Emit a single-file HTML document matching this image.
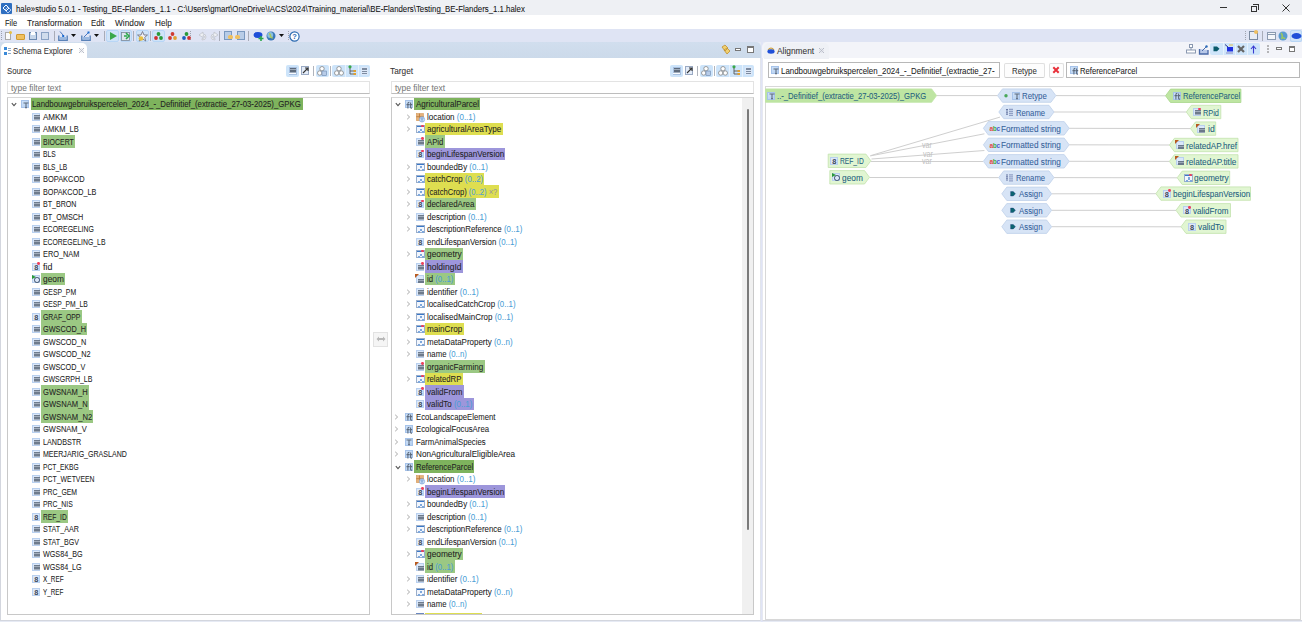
<!DOCTYPE html>
<html><head><meta charset="utf-8"><style>
*{margin:0;padding:0;box-sizing:border-box}
html,body{width:1302px;height:622px;overflow:hidden;background:#e6eaf4;font-family:"Liberation Sans", sans-serif;}
.t{position:absolute;white-space:nowrap;font-size:9.2px;line-height:10px;color:#222;transform-origin:0 0;-webkit-text-stroke:0.06px currentColor}
.sv{position:absolute;overflow:visible}
.ic{position:absolute;width:8px;height:8px}
.icb{background:linear-gradient(135deg,#cfe2f8,#b4cff0);border:0.5px solid #a6c3ea}
.icl{background:#dbe8fa;border:0.5px solid #b9d0ef}
.icg{background:#f2f6fd;border:0.6px solid #9aaecb;width:8.8px}
.ic .g{position:absolute;left:0;top:-1px;width:100%;text-align:center;font-size:7px;line-height:10px;font-weight:bold;color:#3d4f6a}
.ic .ln{position:absolute;left:1px;width:5.5px;height:1px;background:#4d5a6c}
.ic .sq{position:absolute;width:2.2px;height:2.2px;background:#7ea8dc}
.ic .g8{position:absolute;left:0.2px;top:-0.6px;width:100%;text-align:center;font-size:7.4px;line-height:9px;font-weight:bold;color:#3d4858}
.rd{position:absolute;width:2.8px;height:2.8px;border-radius:50%;background:#f0405a}
</style></head><body>
<div style="position:absolute;left:0px;top:0px;width:1302px;height:15px;background:#eef0f4"></div><div style="position:absolute;left:1px;top:3px;width:11px;height:11px;background:#2f6fc0;border-radius:1px"></div><svg class="sv" style="left:1px;top:3px" width="11" height="11"><path d="M2 5 L5 2 L8 5 L5 8 Z" stroke="#fff" stroke-width="1" fill="none"/><path d="M4 7 L7 4 L10 7 L7 10Z" stroke="#cfe0ff" stroke-width="0.8" fill="none"/></svg><div class="t" style="left:16px;top:3.75px;color:#111;transform:scaleX(0.8531)">hale»studio 5.0.1 - Testing_BE-Flanders_1.1 - C:\Users\gmart\OneDrive\IACS\2024\Training_material\BE-Flanders\Testing_BE-Flanders_1.1.halex</div><div style="position:absolute;left:1220px;top:7px;width:7px;height:1px;background:#333"></div><div style="position:absolute;left:1250.5px;top:6px;width:6px;height:6px;border:1px solid #333;background:#eef0f4"></div><div style="position:absolute;left:1252.5px;top:4px;width:6px;height:6px;border-top:1px solid #333;border-right:1px solid #333"></div><svg class="sv" style="left:1282px;top:4px" width="8" height="8"><path d="M0.5 0.5 L7.5 7.5 M7.5 0.5 L0.5 7.5" stroke="#333" stroke-width="1"/></svg><div style="position:absolute;left:0px;top:15px;width:1302px;height:14px;background:#ffffff"></div><div class="t" style="left:4.7px;top:17.65px;color:#222;transform:scaleX(0.8140)">File</div><div class="t" style="left:26.8px;top:17.65px;color:#222;transform:scaleX(0.8944)">Transformation</div><div class="t" style="left:90.6px;top:17.65px;color:#222;transform:scaleX(0.8559)">Edit</div><div class="t" style="left:114.5px;top:17.65px;color:#222;transform:scaleX(0.9046)">Window</div><div class="t" style="left:154.5px;top:17.65px;color:#222;transform:scaleX(0.8919)">Help</div><div style="position:absolute;left:0px;top:29px;width:1302px;height:13px;background:#dfe4f4"></div><div style="position:absolute;left:1px;top:31px;width:1px;height:1px;background:#9aa0b0"></div><div style="position:absolute;left:1px;top:33px;width:1px;height:1px;background:#9aa0b0"></div><div style="position:absolute;left:1px;top:35px;width:1px;height:1px;background:#9aa0b0"></div><div style="position:absolute;left:1px;top:37px;width:1px;height:1px;background:#9aa0b0"></div><div style="position:absolute;left:1px;top:39px;width:1px;height:1px;background:#9aa0b0"></div><div style="position:absolute;left:106px;top:30px;width:13px;height:12px;background:#cfe3f8;border:1px solid #b8d6f6;border-radius:2px"></div><div style="position:absolute;left:119.5px;top:30px;width:12.5px;height:12px;background:#cfe3f8;border:1px solid #b8d6f6;border-radius:2px"></div><div style="position:absolute;left:135.5px;top:30px;width:13.5px;height:12px;background:#cfe3f8;border:1px solid #b8d6f6;border-radius:2px"></div><div style="position:absolute;left:151.5px;top:30px;width:13.5px;height:12px;background:#cfe3f8;border:1px solid #b8d6f6;border-radius:2px"></div><div style="position:absolute;left:53.5px;top:31px;width:1px;height:10px;background:#a8acb8"></div><div style="position:absolute;left:103.5px;top:31px;width:1px;height:10px;background:#a8acb8"></div><div style="position:absolute;left:133px;top:31px;width:1px;height:10px;background:#a8acb8"></div><div style="position:absolute;left:150px;top:31px;width:1px;height:10px;background:#a8acb8"></div><div style="position:absolute;left:219.4px;top:31px;width:1px;height:10px;background:#a8acb8"></div><div style="position:absolute;left:248.4px;top:31px;width:1px;height:10px;background:#a8acb8"></div><div style="position:absolute;left:190px;top:31px;width:1px;height:1px;background:#a0a4b0"></div><div style="position:absolute;left:190px;top:33px;width:1px;height:1px;background:#a0a4b0"></div><div style="position:absolute;left:190px;top:35px;width:1px;height:1px;background:#a0a4b0"></div><div style="position:absolute;left:190px;top:37px;width:1px;height:1px;background:#a0a4b0"></div><div style="position:absolute;left:190px;top:39px;width:1px;height:1px;background:#a0a4b0"></div><div style="position:absolute;left:287.5px;top:31px;width:1px;height:1px;background:#a0a4b0"></div><div style="position:absolute;left:287.5px;top:33px;width:1px;height:1px;background:#a0a4b0"></div><div style="position:absolute;left:287.5px;top:35px;width:1px;height:1px;background:#a0a4b0"></div><div style="position:absolute;left:287.5px;top:37px;width:1px;height:1px;background:#a0a4b0"></div><div style="position:absolute;left:287.5px;top:39px;width:1px;height:1px;background:#a0a4b0"></div><div style="position:absolute;left:5px;top:31.5px;width:6px;height:8px;background:#fafafa;border:1px solid #a9a9a9"></div><div style="position:absolute;left:9px;top:31px;width:3px;height:3px;background:#e8c040;border-radius:50%"></div><div style="position:absolute;left:16px;top:34px;width:9px;height:6px;background:#f0c060;border:1px solid #d09a30;border-radius:1px"></div><div style="position:absolute;left:29px;top:32px;width:8px;height:8px;background:#c5d5ea;border:1px solid #6a88b0"></div><div style="position:absolute;left:31px;top:32px;width:4px;height:3px;background:#fff"></div><div style="position:absolute;left:41px;top:32px;width:8px;height:8px;background:#d0dcec;border:1px solid #8aa2c4"></div><svg class="sv" style="left:58px;top:31px" width="10" height="10"><path d="M0.8 4.5 L0.8 9.2 L9.2 9.2 L9.2 4.5" fill="none" stroke="#5a82b8" stroke-width="1.4"/><rect x="1.5" y="6" width="7" height="2.5" fill="#9ab8e0"/><path d="M2 0.5 L5 4" stroke="#4a78c0" stroke-width="1"/><rect x="4.2" y="4" width="2" height="2" fill="#1a6ad0"/></svg><svg class="sv" style="left:71px;top:34px" width="6" height="4"><path d="M0 0 L5 0 L2.5 3Z" fill="#111"/></svg><svg class="sv" style="left:81px;top:31px" width="10" height="10"><path d="M0.8 4.5 L0.8 9.2 L9.2 9.2 L9.2 4.5" fill="none" stroke="#5a82b8" stroke-width="1.4"/><rect x="1.5" y="6" width="7" height="2.5" fill="#9ab8e0"/><path d="M3 6 L7 2" stroke="#4a78c0" stroke-width="1"/><rect x="6.5" y="0.5" width="2" height="2" fill="#1a6ad0"/></svg><svg class="sv" style="left:94px;top:34px" width="6" height="4"><path d="M0 0 L5 0 L2.5 3Z" fill="#111"/></svg><svg class="sv" style="left:108px;top:31px" width="10" height="10"><path d="M2 1 L9 5 L2 9Z" fill="#3aa84a"/></svg><svg class="sv" style="left:121px;top:31px" width="10" height="10"><rect x="0.5" y="1.5" width="8" height="8" fill="#dde4ec" stroke="#7a8898" stroke-width="0.8"/><path d="M3 5 L6 5 M5 2 L8 5 L5 8" stroke="#2aa84a" stroke-width="1.6" fill="none"/></svg><svg class="sv" style="left:137px;top:30.5px" width="11" height="11"><path d="M5.5 0.5 L7 4 L10.5 4 L7.7 6.3 L8.8 10 L5.5 7.8 L2.2 10 L3.3 6.3 L0.5 4 L4 4Z" fill="#f0f0f4" stroke="#6a6a78" stroke-width="0.8"/><circle cx="4" cy="7.5" r="2.3" fill="#e8c040"/></svg><svg class="sv" style="left:153px;top:31px" width="11" height="10"><circle cx="5.5" cy="3" r="1.9" fill="#2a9a3a"/><circle cx="3" cy="7" r="1.9" fill="#d03030"/><circle cx="8" cy="7" r="1.9" fill="#2a9a3a"/></svg><svg class="sv" style="left:167px;top:31px" width="11" height="10"><circle cx="5.5" cy="3" r="1.9" fill="#d03a30"/><circle cx="3" cy="7" r="1.9" fill="#d03a30"/><circle cx="8" cy="7" r="1.9" fill="#e0a030"/></svg><svg class="sv" style="left:181px;top:31px" width="11" height="10"><circle cx="5.5" cy="3" r="1.9" fill="#2a9a3a"/><circle cx="3" cy="7" r="1.9" fill="#2060c0"/><circle cx="8" cy="7" r="1.9" fill="#d03030"/></svg><svg class="sv" style="left:196px;top:31px" width="26" height="10"><path d="M3 4 L7 1 L7 3 Q10 3 10 6 Q10 9 6 9 L6 7.5 Q8.5 7.5 8.5 6 Q8.5 4.5 7 4.5 L7 6.5Z" fill="#eef0f4" stroke="#c0c4cc" stroke-width="0.8"/><path d="M22 4 L18 1 L18 3 Q15 3 15 6 Q15 9 19 9 L19 7.5 Q16.5 7.5 16.5 6 Q16.5 4.5 18 4.5 L18 6.5Z" fill="#eef0f4" stroke="#c0c4cc" stroke-width="0.8"/></svg><div style="position:absolute;left:224px;top:31px;width:8px;height:9px;background:#b8cce8;border:1px solid #7a98c0"></div><div style="position:absolute;left:228px;top:35px;width:5px;height:4px;background:#f0c060;border-radius:40%"></div><div style="position:absolute;left:237px;top:31px;width:8px;height:9px;background:#b8cce8;border:1px solid #7a98c0"></div><div style="position:absolute;left:235px;top:35px;width:5px;height:4px;background:#f0c060;border-radius:40%"></div><svg class="sv" style="left:253px;top:31px" width="12" height="11"><ellipse cx="5" cy="4" rx="4.5" ry="3" fill="#1f4fd8"/><path d="M8 5 L8 10 M5.5 7.5 L10.5 7.5" stroke="#2aa84a" stroke-width="1.6"/></svg><svg class="sv" style="left:266px;top:31px" width="10" height="10"><circle cx="5" cy="5" r="4.5" fill="#3a78b8"/><circle cx="4.2" cy="4" r="3" fill="#8ac0e0"/><path d="M3 2.5 Q5 3.5 4.5 6 Q6 6 6.5 7.5" stroke="#a8c860" stroke-width="1.4" fill="none"/></svg><svg class="sv" style="left:279px;top:34px" width="6" height="4"><path d="M0 0 L5 0 L2.5 3Z" fill="#111"/></svg><svg class="sv" style="left:289px;top:30.5px" width="11" height="11"><circle cx="5.5" cy="5.5" r="4.6" fill="#fff" stroke="#2a6ab0" stroke-width="1.2"/><text x="5.5" y="8.3" font-size="7.5" text-anchor="middle" fill="#2a6ab0" font-family="Liberation Sans" font-weight="bold">?</text></svg><div style="position:absolute;left:1245px;top:31px;width:1px;height:1px;background:#a0a4b0"></div><div style="position:absolute;left:1245px;top:33px;width:1px;height:1px;background:#a0a4b0"></div><div style="position:absolute;left:1245px;top:35px;width:1px;height:1px;background:#a0a4b0"></div><div style="position:absolute;left:1245px;top:37px;width:1px;height:1px;background:#a0a4b0"></div><div style="position:absolute;left:1245px;top:39px;width:1px;height:1px;background:#a0a4b0"></div><div style="position:absolute;left:1249px;top:31px;width:9px;height:9px;background:#e8ecf4;border:1px solid #7a8aa0"></div><div style="position:absolute;left:1254px;top:30px;width:4px;height:4px;background:#f0c060;border-radius:50%"></div><div style="position:absolute;left:1262px;top:31px;width:1px;height:10px;background:#a8acb8"></div><div style="position:absolute;left:1267px;top:32px;width:9px;height:8px;background:#f4f6fa;border:1px solid #8a9ab0"></div><div style="position:absolute;left:1267px;top:34px;width:9px;height:1px;background:#8a9ab0"></div><svg class="sv" style="left:1278px;top:31px" width="10" height="10"><circle cx="5" cy="5" r="4.5" fill="#5a9ad0"/><path d="M3 2 Q5 4 4 7 Q6 6 7 8" stroke="#9ac860" stroke-width="1.5" fill="none"/></svg><div style="position:absolute;left:1290px;top:30px;width:12px;height:12px;background:#cfe3f8;border:1px solid #b8d6f6;border-radius:2px"></div><svg class="sv" style="left:1291px;top:32px" width="11" height="8"><ellipse cx="5.5" cy="4" rx="5" ry="3" fill="#1f4fd8"/></svg><div style="position:absolute;left:0px;top:42px;width:761px;height:17px;background:linear-gradient(#d1deee,#ccdaea);border-top-right-radius:5px;border-bottom:1px solid #c6d4e6"></div><div style="position:absolute;left:0px;top:58px;width:761px;height:563px;background:#ffffff;border-left:1px solid #d3d6de;border-right:1px solid #e2e5ec;border-bottom:1px solid #d3d6de"></div><div style="position:absolute;left:1px;top:42.5px;width:86px;height:16px;background:#ffffff;border-top-left-radius:5px;border-top-right-radius:5px"></div><div style="position:absolute;left:4px;top:47px;width:3px;height:3px;background:#3a8ad8"></div><div style="position:absolute;left:4px;top:52px;width:3px;height:3px;background:#3a8ad8"></div><div style="position:absolute;left:8px;top:48px;width:3px;height:1px;background:#8aa8c8"></div><div style="position:absolute;left:8px;top:50px;width:3px;height:1px;background:#8aa8c8"></div><div style="position:absolute;left:8px;top:53px;width:3px;height:1px;background:#8aa8c8"></div><div class="t" style="left:13px;top:46px;color:#333;transform:scaleX(0.8469)">Schema Explorer</div><svg class="sv" style="left:78px;top:47px" width="7" height="7"><path d="M1 1 L6 6 M6 1 L1 6" stroke="#b8bcc8" stroke-width="1"/><circle cx="3.5" cy="3.5" r="1.6" fill="none" stroke="#c8ccd6" stroke-width="0.7"/></svg><svg class="sv" style="left:720px;top:44px" width="11" height="11"><path d="M2 3 L5 1 L8 4 L5 7Z M4 6 L7 4 L10 7 L7 10Z" fill="#f0d070" stroke="#c09030" stroke-width="0.8"/></svg><div style="position:absolute;left:735px;top:47.5px;width:6px;height:3px;border:1px solid #777;background:#fff"></div><div style="position:absolute;left:747px;top:45.5px;width:7px;height:7px;border:1px solid #777;border-top-width:2px;background:#fff"></div><div class="t" style="left:7px;top:66px;color:#333;transform:scaleX(0.8443)">Source</div><div class="t" style="left:390px;top:66px;color:#333;transform:scaleX(0.9029)">Target</div><div style="position:absolute;left:286px;top:64.5px;width:13px;height:12px;background:#cde4fa;border-radius:2px"></div><div style="position:absolute;left:288.5px;top:66.5px;width:8px;height:8px;background:#d8e6f8;border:0.5px solid #a8c0e0"></div><div style="position:absolute;left:289.5px;top:68px;width:6px;height:4.5px;background:repeating-linear-gradient(#5e6b7c 0 1px,#a0acbc 1px 1.7px)"></div><div style="position:absolute;left:289px;top:73.3px;width:7px;height:1px;background:#f8fbff"></div><div style="position:absolute;left:301px;top:66px;width:8px;height:9px;background:#e4ecf8;border:1px solid #9aaac4"></div><svg class="sv" style="left:302px;top:67px" width="7" height="7"><path d="M1 6 L6 1 M3 1 L6 1 L6 4" stroke="#333" stroke-width="1.1" fill="none"/></svg><div style="position:absolute;left:312.5px;top:66px;width:1px;height:10px;background:#b0b4bc"></div><div style="position:absolute;left:315.5px;top:64.5px;width:13px;height:12px;background:#cde4fa;border-radius:2px"></div><svg class="sv" style="left:317px;top:65.5px" width="10" height="10"><circle cx="5" cy="2.7" r="2.2" fill="#fff" stroke="#777" stroke-width="0.7"/><circle cx="2.7" cy="7" r="2.2" fill="#fff" stroke="#777" stroke-width="0.7"/><rect x="5" y="5" width="4.5" height="4.5" fill="#b8cce8" stroke="#6a88b0" stroke-width="0.6"/></svg><div style="position:absolute;left:329.5px;top:66px;width:1px;height:10px;background:#b0b4bc"></div><div style="position:absolute;left:332px;top:64.5px;width:38px;height:12px;background:#cde4fa;border-radius:2px"></div><div style="position:absolute;left:345px;top:64.5px;width:0.6px;height:12px;background:#e8f2fc"></div><div style="position:absolute;left:357.5px;top:64.5px;width:0.6px;height:12px;background:#e8f2fc"></div><svg class="sv" style="left:334px;top:65.5px" width="10" height="10"><circle cx="5" cy="2.7" r="2.2" fill="#fff" stroke="#777" stroke-width="0.7"/><circle cx="2.7" cy="7" r="2.2" fill="#fff" stroke="#777" stroke-width="0.7"/><circle cx="7.3" cy="7" r="2.2" fill="#fff" stroke="#777" stroke-width="0.7"/></svg><svg class="sv" style="left:347px;top:65px" width="10" height="11"><circle cx="3" cy="1.8" r="1.6" fill="#3aa84a"/><path d="M3 3 L3 9 L8 9 M3 6 L8 6" stroke="#555" stroke-width="0.9" fill="none"/><rect x="6.5" y="5" width="2.5" height="2" fill="#e0a030"/><rect x="6.5" y="8" width="2.5" height="2" fill="#e0a030"/></svg><div style="position:absolute;left:360.5px;top:66.5px;width:7px;height:8px;background:#dde8f8"></div><div style="position:absolute;left:361.5px;top:67.5px;width:5px;height:1px;background:#7d8ba0"></div><div style="position:absolute;left:361.5px;top:69.3px;width:5px;height:1px;background:#7d8ba0"></div><div style="position:absolute;left:361.5px;top:71.1px;width:5px;height:1px;background:#7d8ba0"></div><div style="position:absolute;left:361.5px;top:72.9px;width:5px;height:1px;background:#7d8ba0"></div><div style="position:absolute;left:670px;top:64.5px;width:13px;height:12px;background:#cde4fa;border-radius:2px"></div><div style="position:absolute;left:672.5px;top:66.5px;width:8px;height:8px;background:#d8e6f8;border:0.5px solid #a8c0e0"></div><div style="position:absolute;left:673.5px;top:68px;width:6px;height:4.5px;background:repeating-linear-gradient(#5e6b7c 0 1px,#a0acbc 1px 1.7px)"></div><div style="position:absolute;left:673px;top:73.3px;width:7px;height:1px;background:#f8fbff"></div><div style="position:absolute;left:685px;top:66px;width:8px;height:9px;background:#e4ecf8;border:1px solid #9aaac4"></div><svg class="sv" style="left:686px;top:67px" width="7" height="7"><path d="M1 6 L6 1 M3 1 L6 1 L6 4" stroke="#333" stroke-width="1.1" fill="none"/></svg><div style="position:absolute;left:696.5px;top:66px;width:1px;height:10px;background:#b0b4bc"></div><div style="position:absolute;left:699.5px;top:64.5px;width:13px;height:12px;background:#cde4fa;border-radius:2px"></div><svg class="sv" style="left:701px;top:65.5px" width="10" height="10"><circle cx="5" cy="2.7" r="2.2" fill="#fff" stroke="#777" stroke-width="0.7"/><circle cx="2.7" cy="7" r="2.2" fill="#fff" stroke="#777" stroke-width="0.7"/><rect x="5" y="5" width="4.5" height="4.5" fill="#b8cce8" stroke="#6a88b0" stroke-width="0.6"/></svg><div style="position:absolute;left:713.5px;top:66px;width:1px;height:10px;background:#b0b4bc"></div><div style="position:absolute;left:716px;top:64.5px;width:38px;height:12px;background:#cde4fa;border-radius:2px"></div><div style="position:absolute;left:729px;top:64.5px;width:0.6px;height:12px;background:#e8f2fc"></div><div style="position:absolute;left:741.5px;top:64.5px;width:0.6px;height:12px;background:#e8f2fc"></div><svg class="sv" style="left:718px;top:65.5px" width="10" height="10"><circle cx="5" cy="2.7" r="2.2" fill="#fff" stroke="#777" stroke-width="0.7"/><circle cx="2.7" cy="7" r="2.2" fill="#fff" stroke="#777" stroke-width="0.7"/><circle cx="7.3" cy="7" r="2.2" fill="#fff" stroke="#777" stroke-width="0.7"/></svg><svg class="sv" style="left:731px;top:65px" width="10" height="11"><circle cx="3" cy="1.8" r="1.6" fill="#3aa84a"/><path d="M3 3 L3 9 L8 9 M3 6 L8 6" stroke="#555" stroke-width="0.9" fill="none"/><rect x="6.5" y="5" width="2.5" height="2" fill="#e0a030"/><rect x="6.5" y="8" width="2.5" height="2" fill="#e0a030"/></svg><div style="position:absolute;left:744.5px;top:66.5px;width:7px;height:8px;background:#dde8f8"></div><div style="position:absolute;left:745.5px;top:67.5px;width:5px;height:1px;background:#7d8ba0"></div><div style="position:absolute;left:745.5px;top:69.3px;width:5px;height:1px;background:#7d8ba0"></div><div style="position:absolute;left:745.5px;top:71.1px;width:5px;height:1px;background:#7d8ba0"></div><div style="position:absolute;left:745.5px;top:72.9px;width:5px;height:1px;background:#7d8ba0"></div><div style="position:absolute;left:7px;top:80.5px;width:362.5px;height:13px;background:#fff;border:1px solid #e3e3e3;border-bottom:1px solid #bdbdbd"></div><div class="t" style="left:10.8px;top:82.5px;color:#7a7a7a;transform:scaleX(0.9160)">type filter text</div><div style="position:absolute;left:391px;top:80.5px;width:362.5px;height:13px;background:#fff;border:1px solid #e3e3e3;border-bottom:1px solid #bdbdbd"></div><div class="t" style="left:394.8px;top:82.5px;color:#7a7a7a;transform:scaleX(0.9160)">type filter text</div><div style="position:absolute;left:7px;top:97px;width:362.5px;height:518px;background:#fff;border:1px solid #c8c8c8;border-top-color:#d8d8d8"></div><div style="position:absolute;left:390.5px;top:97px;width:363.5px;height:518px;background:#fff;border:1px solid #c8c8c8;border-top-color:#d8d8d8"></div><div style="position:absolute;left:742px;top:98px;width:11px;height:516px;background:#f0f0f0"></div><div style="position:absolute;left:747px;top:109px;width:1.6px;height:421px;background:#7a7a7a;border-radius:1px"></div><div style="position:absolute;left:373px;top:331.5px;width:15px;height:15.5px;background:#f5f5f5;border:1px solid #e2e2e2"></div><svg class="sv" style="left:376px;top:336px" width="10" height="6"><path d="M0.5 3 L3 0.5 L3 2 L7 2 L7 0.5 L9.5 3 L7 5.5 L7 4 L3 4 L3 5.5Z" fill="#b8b8b8"/></svg><svg class="sv" style="left:11px;top:102.0px" width="6" height="5"><path d="M0.8 1.2 L3 3.6 L5.2 1.2" stroke="#555" stroke-width="1.1" fill="none"/></svg><div class="ic icb" style="left:21px;top:100.0px"><svg width="8" height="8" style="position:absolute;left:-0.5px;top:-0.5px"><path d="M1.5 2 L6.5 2 M4 2 L4 6.8 M3 6.8 L5 6.8" stroke="#5d6a7c" stroke-width="1.05"/></svg></div><div style="position:absolute;left:30.5px;top:97.75px;width:272.1px;height:12.5px;background:#7eb35d"></div><div class="t" style="left:32px;top:99.4px;transform:scaleX(0.8488)">Landbouwgebruikspercelen_2024_-_Definitief_(extractie_27-03-2025)_GPKG</div><div class="ic icl" style="left:32px;top:112.5px"><i style="position:absolute;left:0.8px;top:1.3px;width:5.9px;height:5.2px;background:repeating-linear-gradient(#6e7b8c 0 1px,#a3aebd 1px 1.7px)"></i></div><div class="t" style="left:42.8px;top:111.9px;transform:scaleX(0.8749)">AMKM</div><div class="ic icl" style="left:32px;top:125.0px"><i style="position:absolute;left:0.8px;top:1.3px;width:5.9px;height:5.2px;background:repeating-linear-gradient(#6e7b8c 0 1px,#a3aebd 1px 1.7px)"></i></div><div class="t" style="left:42.8px;top:124.4px;transform:scaleX(0.8140)">AMKM_LB</div><div class="ic icl" style="left:32px;top:137.5px"><i style="position:absolute;left:0.8px;top:1.3px;width:5.9px;height:5.2px;background:repeating-linear-gradient(#6e7b8c 0 1px,#a3aebd 1px 1.7px)"></i></div><div style="position:absolute;left:41.3px;top:135.25px;width:33.9px;height:12.5px;background:#9bc883"></div><div class="t" style="left:42.8px;top:136.9px;transform:scaleX(0.7577)">BIOCERT</div><div class="ic icl" style="left:32px;top:150.0px"><i style="position:absolute;left:0.8px;top:1.3px;width:5.9px;height:5.2px;background:repeating-linear-gradient(#6e7b8c 0 1px,#a3aebd 1px 1.7px)"></i></div><div class="t" style="left:42.8px;top:149.4px;transform:scaleX(0.7263)">BLS</div><div class="ic icl" style="left:32px;top:162.5px"><i style="position:absolute;left:0.8px;top:1.3px;width:5.9px;height:5.2px;background:repeating-linear-gradient(#6e7b8c 0 1px,#a3aebd 1px 1.7px)"></i></div><div class="t" style="left:42.8px;top:161.9px;transform:scaleX(0.7190)">BLS_LB</div><div class="ic icl" style="left:32px;top:175.0px"><i style="position:absolute;left:0.8px;top:1.3px;width:5.9px;height:5.2px;background:repeating-linear-gradient(#6e7b8c 0 1px,#a3aebd 1px 1.7px)"></i></div><div class="t" style="left:42.8px;top:174.4px;transform:scaleX(0.8099)">BOPAKCOD</div><div class="ic icl" style="left:32px;top:187.5px"><i style="position:absolute;left:0.8px;top:1.3px;width:5.9px;height:5.2px;background:repeating-linear-gradient(#6e7b8c 0 1px,#a3aebd 1px 1.7px)"></i></div><div class="t" style="left:42.8px;top:186.9px;transform:scaleX(0.7861)">BOPAKCOD_LB</div><div class="ic icl" style="left:32px;top:200.0px"><i style="position:absolute;left:0.8px;top:1.3px;width:5.9px;height:5.2px;background:repeating-linear-gradient(#6e7b8c 0 1px,#a3aebd 1px 1.7px)"></i></div><div class="t" style="left:42.8px;top:199.4px;transform:scaleX(0.7701)">BT_BRON</div><div class="ic icl" style="left:32px;top:212.5px"><i style="position:absolute;left:0.8px;top:1.3px;width:5.9px;height:5.2px;background:repeating-linear-gradient(#6e7b8c 0 1px,#a3aebd 1px 1.7px)"></i></div><div class="t" style="left:42.8px;top:211.9px;transform:scaleX(0.7894)">BT_OMSCH</div><div class="ic icl" style="left:32px;top:225.0px"><i style="position:absolute;left:0.8px;top:1.3px;width:5.9px;height:5.2px;background:repeating-linear-gradient(#6e7b8c 0 1px,#a3aebd 1px 1.7px)"></i></div><div class="t" style="left:42.8px;top:224.4px;transform:scaleX(0.7544)">ECOREGELING</div><div class="ic icl" style="left:32px;top:237.5px"><i style="position:absolute;left:0.8px;top:1.3px;width:5.9px;height:5.2px;background:repeating-linear-gradient(#6e7b8c 0 1px,#a3aebd 1px 1.7px)"></i></div><div class="t" style="left:42.8px;top:236.9px;transform:scaleX(0.7460)">ECOREGELING_LB</div><div class="ic icl" style="left:32px;top:250.0px"><i style="position:absolute;left:0.8px;top:1.3px;width:5.9px;height:5.2px;background:repeating-linear-gradient(#6e7b8c 0 1px,#a3aebd 1px 1.7px)"></i></div><div class="t" style="left:42.8px;top:249.4px;transform:scaleX(0.7998)">ERO_NAM</div><div class="ic icl" style="left:32px;top:262.5px"><span class="g8">8</span></div><div class="rd" style="left:37.3px;top:262.2px"></div><div class="t" style="left:42.8px;top:261.9px;transform:scaleX(0.9626)">fid</div><div class="ic icl" style="left:32px;top:275.0px"><i style="position:absolute;left:1px;top:1.2px;width:5.6px;height:5.6px;border:1.8px solid #3a4f6a;border-radius:50%"></i><i style="position:absolute;left:-1px;top:-1px;width:0;height:0;border-left:4px solid #2a9a3a;border-top:2px solid transparent;border-bottom:2px solid transparent"></i></div><div style="position:absolute;left:41.3px;top:272.75px;width:23.9px;height:12.5px;background:#9bc883"></div><div class="t" style="left:42.8px;top:274.4px;transform:scaleX(0.9073)">geom</div><div class="ic icl" style="left:32px;top:287.5px"><i style="position:absolute;left:0.8px;top:1.3px;width:5.9px;height:5.2px;background:repeating-linear-gradient(#6e7b8c 0 1px,#a3aebd 1px 1.7px)"></i></div><div class="t" style="left:42.8px;top:286.9px;transform:scaleX(0.7456)">GESP_PM</div><div class="ic icl" style="left:32px;top:300.0px"><i style="position:absolute;left:0.8px;top:1.3px;width:5.9px;height:5.2px;background:repeating-linear-gradient(#6e7b8c 0 1px,#a3aebd 1px 1.7px)"></i></div><div class="t" style="left:42.8px;top:299.4px;transform:scaleX(0.7364)">GESP_PM_LB</div><div class="ic icl" style="left:32px;top:312.5px"><span class="g8">8</span></div><div style="position:absolute;left:41.3px;top:310.25px;width:40.5px;height:12.5px;background:#9bc883"></div><div class="t" style="left:42.8px;top:311.9px;transform:scaleX(0.7478)">GRAF_OPP</div><div class="ic icl" style="left:32px;top:325.0px"><i style="position:absolute;left:0.8px;top:1.3px;width:5.9px;height:5.2px;background:repeating-linear-gradient(#6e7b8c 0 1px,#a3aebd 1px 1.7px)"></i></div><div style="position:absolute;left:41.3px;top:322.75px;width:46.1px;height:12.5px;background:#9bc883"></div><div class="t" style="left:42.8px;top:324.4px;transform:scaleX(0.7961)">GWSCOD_H</div><div class="ic icl" style="left:32px;top:337.5px"><i style="position:absolute;left:0.8px;top:1.3px;width:5.9px;height:5.2px;background:repeating-linear-gradient(#6e7b8c 0 1px,#a3aebd 1px 1.7px)"></i></div><div class="t" style="left:42.8px;top:336.9px;transform:scaleX(0.7987)">GWSCOD_N</div><div class="ic icl" style="left:32px;top:350.0px"><i style="position:absolute;left:0.8px;top:1.3px;width:5.9px;height:5.2px;background:repeating-linear-gradient(#6e7b8c 0 1px,#a3aebd 1px 1.7px)"></i></div><div class="t" style="left:42.8px;top:349.4px;transform:scaleX(0.8047)">GWSCOD_N2</div><div class="ic icl" style="left:32px;top:362.5px"><i style="position:absolute;left:0.8px;top:1.3px;width:5.9px;height:5.2px;background:repeating-linear-gradient(#6e7b8c 0 1px,#a3aebd 1px 1.7px)"></i></div><div class="t" style="left:42.8px;top:361.9px;transform:scaleX(0.7876)">GWSCOD_V</div><div class="ic icl" style="left:32px;top:375.0px"><i style="position:absolute;left:0.8px;top:1.3px;width:5.9px;height:5.2px;background:repeating-linear-gradient(#6e7b8c 0 1px,#a3aebd 1px 1.7px)"></i></div><div class="t" style="left:42.8px;top:374.4px;transform:scaleX(0.7624)">GWSGRPH_LB</div><div class="ic icl" style="left:32px;top:387.5px"><i style="position:absolute;left:0.8px;top:1.3px;width:5.9px;height:5.2px;background:repeating-linear-gradient(#6e7b8c 0 1px,#a3aebd 1px 1.7px)"></i></div><div style="position:absolute;left:41.3px;top:385.25px;width:47.7px;height:12.5px;background:#9bc883"></div><div class="t" style="left:42.8px;top:386.9px;transform:scaleX(0.8243)">GWSNAM_H</div><div class="ic icl" style="left:32px;top:400.0px"><i style="position:absolute;left:0.8px;top:1.3px;width:5.9px;height:5.2px;background:repeating-linear-gradient(#6e7b8c 0 1px,#a3aebd 1px 1.7px)"></i></div><div style="position:absolute;left:41.3px;top:397.75px;width:47.8px;height:12.5px;background:#9bc883"></div><div class="t" style="left:42.8px;top:399.4px;transform:scaleX(0.8269)">GWSNAM_N</div><div class="ic icl" style="left:32px;top:412.5px"><i style="position:absolute;left:0.8px;top:1.3px;width:5.9px;height:5.2px;background:repeating-linear-gradient(#6e7b8c 0 1px,#a3aebd 1px 1.7px)"></i></div><div style="position:absolute;left:41.3px;top:410.25px;width:52.2px;height:12.5px;background:#9bc883"></div><div class="t" style="left:42.8px;top:411.9px;transform:scaleX(0.8304)">GWSNAM_N2</div><div class="ic icl" style="left:32px;top:425.0px"><i style="position:absolute;left:0.8px;top:1.3px;width:5.9px;height:5.2px;background:repeating-linear-gradient(#6e7b8c 0 1px,#a3aebd 1px 1.7px)"></i></div><div class="t" style="left:42.8px;top:424.4px;transform:scaleX(0.8160)">GWSNAM_V</div><div class="ic icl" style="left:32px;top:437.5px"><i style="position:absolute;left:0.8px;top:1.3px;width:5.9px;height:5.2px;background:repeating-linear-gradient(#6e7b8c 0 1px,#a3aebd 1px 1.7px)"></i></div><div class="t" style="left:42.8px;top:436.9px;transform:scaleX(0.7808)">LANDBSTR</div><div class="ic icl" style="left:32px;top:450.0px"><i style="position:absolute;left:0.8px;top:1.3px;width:5.9px;height:5.2px;background:repeating-linear-gradient(#6e7b8c 0 1px,#a3aebd 1px 1.7px)"></i></div><div class="t" style="left:42.8px;top:449.4px;transform:scaleX(0.7671)">MEERJARIG_GRASLAND</div><div class="ic icl" style="left:32px;top:462.5px"><i style="position:absolute;left:0.8px;top:1.3px;width:5.9px;height:5.2px;background:repeating-linear-gradient(#6e7b8c 0 1px,#a3aebd 1px 1.7px)"></i></div><div class="t" style="left:42.8px;top:461.9px;transform:scaleX(0.7280)">PCT_EKBG</div><div class="ic icl" style="left:32px;top:475.0px"><i style="position:absolute;left:0.8px;top:1.3px;width:5.9px;height:5.2px;background:repeating-linear-gradient(#6e7b8c 0 1px,#a3aebd 1px 1.7px)"></i></div><div class="t" style="left:42.8px;top:474.4px;transform:scaleX(0.7485)">PCT_WETVEEN</div><div class="ic icl" style="left:32px;top:487.5px"><i style="position:absolute;left:0.8px;top:1.3px;width:5.9px;height:5.2px;background:repeating-linear-gradient(#6e7b8c 0 1px,#a3aebd 1px 1.7px)"></i></div><div class="t" style="left:42.8px;top:486.9px;transform:scaleX(0.7509)">PRC_GEM</div><div class="ic icl" style="left:32px;top:500.0px"><i style="position:absolute;left:0.8px;top:1.3px;width:5.9px;height:5.2px;background:repeating-linear-gradient(#6e7b8c 0 1px,#a3aebd 1px 1.7px)"></i></div><div class="t" style="left:42.8px;top:499.4px;transform:scaleX(0.7497)">PRC_NIS</div><div class="ic icl" style="left:32px;top:512.5px"><span class="g8">8</span></div><div style="position:absolute;left:41.3px;top:510.25px;width:26.8px;height:12.5px;background:#9bc883"></div><div class="t" style="left:42.8px;top:511.9px;transform:scaleX(0.7278)">REF_ID</div><div class="ic icl" style="left:32px;top:525.0px"><i style="position:absolute;left:0.8px;top:1.3px;width:5.9px;height:5.2px;background:repeating-linear-gradient(#6e7b8c 0 1px,#a3aebd 1px 1.7px)"></i></div><div class="t" style="left:42.8px;top:524.4px;transform:scaleX(0.7788)">STAT_AAR</div><div class="ic icl" style="left:32px;top:537.5px"><i style="position:absolute;left:0.8px;top:1.3px;width:5.9px;height:5.2px;background:repeating-linear-gradient(#6e7b8c 0 1px,#a3aebd 1px 1.7px)"></i></div><div class="t" style="left:42.8px;top:536.9px;transform:scaleX(0.7728)">STAT_BGV</div><div class="ic icl" style="left:32px;top:550.0px"><i style="position:absolute;left:0.8px;top:1.3px;width:5.9px;height:5.2px;background:repeating-linear-gradient(#6e7b8c 0 1px,#a3aebd 1px 1.7px)"></i></div><div class="t" style="left:42.8px;top:549.4px;transform:scaleX(0.7822)">WGS84_BG</div><div class="ic icl" style="left:32px;top:562.5px"><i style="position:absolute;left:0.8px;top:1.3px;width:5.9px;height:5.2px;background:repeating-linear-gradient(#6e7b8c 0 1px,#a3aebd 1px 1.7px)"></i></div><div class="t" style="left:42.8px;top:561.9px;transform:scaleX(0.7811)">WGS84_LG</div><div class="ic icl" style="left:32px;top:575.0px"><span class="g8">8</span></div><div class="t" style="left:42.8px;top:574.4px;transform:scaleX(0.6941)">X_REF</div><div class="ic icl" style="left:32px;top:587.5px"><span class="g8">8</span></div><div class="t" style="left:42.8px;top:586.9px;transform:scaleX(0.6846)">Y_REF</div><svg class="sv" style="left:395px;top:102.0px" width="6" height="5"><path d="M0.8 1.2 L3 3.6 L5.2 1.2" stroke="#555" stroke-width="1.1" fill="none"/></svg><div class="ic icb" style="left:404.8px;top:100.0px"><svg width="9" height="9" style="position:absolute;left:-0.5px;top:-0.5px"><path d="M2.9 7.6 L2.9 2.6 Q2.9 1.3 4.3 1.4 M1.5 3.6 L4.3 3.6 M5.6 1.6 L5.6 6.3 Q5.6 7.3 7 7.1 M4.6 3.6 L7.2 3.6" stroke="#5d6a7c" stroke-width="1.05" fill="none"/></svg></div><div style="position:absolute;left:414.2px;top:97.75px;width:66.2px;height:12.5px;background:#7eb35d"></div><div class="t" style="left:415.7px;top:99.4px;transform:scaleX(0.8761)">AgriculturalParcel</div><svg class="sv" style="left:406px;top:113.5px" width="5" height="6"><path d="M1.2 0.8 L3.6 3 L1.2 5.2" stroke="#9a9a9a" stroke-width="0.85" fill="none"/></svg><svg class="sv" style="left:416px;top:112.5px" width="10" height="10"><rect x="0.3" y="0.5" width="7.2" height="7.2" fill="#e6b27a" stroke="#d0904e" stroke-width="0.5"/><path d="M3.5 0.5 L3.5 7.7 M0.3 3.7 L7.5 3.7" stroke="#b8783a" stroke-width="0.8"/><circle cx="6" cy="6.4" r="2.7" fill="#c4daf4" stroke="#7ea4d8" stroke-width="0.6"/><path d="M6 3.9 L6 8.9 M4.5 5.5 Q6 7 7.5 5.5" stroke="#6a94cc" stroke-width="0.6" fill="none"/></svg><div class="t" style="left:426.8px;top:111.9px;transform:scaleX(0.8700)">location <span style="color:#4a9ed6">(0..1)</span></div><svg class="sv" style="left:406px;top:126.0px" width="5" height="6"><path d="M1.2 0.8 L3.6 3 L1.2 5.2" stroke="#9a9a9a" stroke-width="0.85" fill="none"/></svg><div class="ic icg" style="left:416px;top:125.0px"><i style="position:absolute;left:0;top:0;width:100%;height:1.4px;background:#3a78c8"></i><i class="sq" style="left:3px;top:2.6px"></i><i class="sq" style="left:0.9px;top:5px"></i><i class="sq" style="left:5.1px;top:5px"></i></div><div class="rd" style="left:421.3px;top:124.7px"></div><div style="position:absolute;left:425.3px;top:122.75px;width:77.3px;height:12.5px;background:#dede50"></div><div class="t" style="left:426.8px;top:124.4px;transform:scaleX(0.8812)">agriculturalAreaType</div><div class="ic icl" style="left:416px;top:137.5px"><i style="position:absolute;left:0.8px;top:1.3px;width:5.9px;height:5.2px;background:repeating-linear-gradient(#6e7b8c 0 1px,#a3aebd 1px 1.7px)"></i></div><div class="rd" style="left:421.3px;top:137.2px"></div><div style="position:absolute;left:425.3px;top:135.25px;width:19.3px;height:12.5px;background:#9bc883"></div><div class="t" style="left:426.8px;top:136.9px;transform:scaleX(0.8410)">APid</div><div class="ic icl" style="left:416px;top:150.0px"><span class="g8">8</span></div><div class="rd" style="left:421.3px;top:149.7px"></div><div style="position:absolute;left:425.3px;top:147.75px;width:80.2px;height:12.5px;background:#9d96db"></div><div class="t" style="left:426.8px;top:149.4px;transform:scaleX(0.8780)">beginLifespanVersion</div><svg class="sv" style="left:406px;top:163.5px" width="5" height="6"><path d="M1.2 0.8 L3.6 3 L1.2 5.2" stroke="#9a9a9a" stroke-width="0.85" fill="none"/></svg><div class="ic icg" style="left:416px;top:162.5px"><i style="position:absolute;left:0;top:0;width:100%;height:1.4px;background:#3a78c8"></i><i class="sq" style="left:3px;top:2.6px"></i><i class="sq" style="left:0.9px;top:5px"></i><i class="sq" style="left:5.1px;top:5px"></i></div><div class="t" style="left:426.8px;top:161.9px;transform:scaleX(0.8623)">boundedBy <span style="color:#4a9ed6">(0..1)</span></div><svg class="sv" style="left:406px;top:176.0px" width="5" height="6"><path d="M1.2 0.8 L3.6 3 L1.2 5.2" stroke="#9a9a9a" stroke-width="0.85" fill="none"/></svg><div class="ic icg" style="left:416px;top:175.0px"><i style="position:absolute;left:0;top:0;width:100%;height:1.4px;background:#3a78c8"></i><i class="sq" style="left:3px;top:2.6px"></i><i class="sq" style="left:0.9px;top:5px"></i><i class="sq" style="left:5.1px;top:5px"></i></div><div style="position:absolute;left:425.3px;top:172.75px;width:59.2px;height:12.5px;background:#dede50"></div><div class="t" style="left:426.8px;top:174.4px;transform:scaleX(0.8516)">catchCrop <span style="color:#4a9ed6">(0..2)</span></div><svg class="sv" style="left:406px;top:188.5px" width="5" height="6"><path d="M1.2 0.8 L3.6 3 L1.2 5.2" stroke="#9a9a9a" stroke-width="0.85" fill="none"/></svg><div class="ic icg" style="left:416px;top:187.5px"><i style="position:absolute;left:0;top:0;width:100%;height:1.4px;background:#3a78c8"></i><i class="sq" style="left:3px;top:2.6px"></i><i class="sq" style="left:0.9px;top:5px"></i><i class="sq" style="left:5.1px;top:5px"></i></div><div style="position:absolute;left:425.3px;top:185.25px;width:73.4px;height:12.5px;background:#dede50"></div><div class="t" style="left:426.8px;top:186.9px;transform:scaleX(0.8270)">(catchCrop) <span style="color:#4a9ed6">(0..2)</span> <span style="color:#999">×?</span></div><svg class="sv" style="left:406px;top:201.0px" width="5" height="6"><path d="M1.2 0.8 L3.6 3 L1.2 5.2" stroke="#9a9a9a" stroke-width="0.85" fill="none"/></svg><div class="ic icl" style="left:416px;top:200.0px"><span class="g8">8</span></div><div class="rd" style="left:421.3px;top:199.7px"></div><div style="position:absolute;left:425.3px;top:197.75px;width:50.5px;height:12.5px;background:#9bc883"></div><div class="t" style="left:426.8px;top:199.4px;transform:scaleX(0.8673)">declaredArea</div><svg class="sv" style="left:406px;top:213.5px" width="5" height="6"><path d="M1.2 0.8 L3.6 3 L1.2 5.2" stroke="#9a9a9a" stroke-width="0.85" fill="none"/></svg><div class="ic icl" style="left:416px;top:212.5px"><i style="position:absolute;left:0.8px;top:1.3px;width:5.9px;height:5.2px;background:repeating-linear-gradient(#6e7b8c 0 1px,#a3aebd 1px 1.7px)"></i></div><div class="t" style="left:426.8px;top:211.9px;transform:scaleX(0.8723)">description <span style="color:#4a9ed6">(0..1)</span></div><svg class="sv" style="left:406px;top:226.0px" width="5" height="6"><path d="M1.2 0.8 L3.6 3 L1.2 5.2" stroke="#9a9a9a" stroke-width="0.85" fill="none"/></svg><div class="ic icg" style="left:416px;top:225.0px"><i style="position:absolute;left:0;top:0;width:100%;height:1.4px;background:#3a78c8"></i><i class="sq" style="left:3px;top:2.6px"></i><i class="sq" style="left:0.9px;top:5px"></i><i class="sq" style="left:5.1px;top:5px"></i></div><div class="t" style="left:426.8px;top:224.4px;transform:scaleX(0.8606)">descriptionReference <span style="color:#4a9ed6">(0..1)</span></div><div class="ic icl" style="left:416px;top:237.5px"><span class="g8">8</span></div><div class="t" style="left:426.8px;top:236.9px;transform:scaleX(0.8591)">endLifespanVersion <span style="color:#4a9ed6">(0..1)</span></div><svg class="sv" style="left:406px;top:251.0px" width="5" height="6"><path d="M1.2 0.8 L3.6 3 L1.2 5.2" stroke="#9a9a9a" stroke-width="0.85" fill="none"/></svg><div class="ic icg" style="left:416px;top:250.0px"><i style="position:absolute;left:0;top:0;width:100%;height:1.4px;background:#3a78c8"></i><i class="sq" style="left:3px;top:2.6px"></i><i class="sq" style="left:0.9px;top:5px"></i><i class="sq" style="left:5.1px;top:5px"></i></div><div class="rd" style="left:421.3px;top:249.7px"></div><div style="position:absolute;left:425.3px;top:247.75px;width:37.7px;height:12.5px;background:#9bc883"></div><div class="t" style="left:426.8px;top:249.4px;transform:scaleX(0.9061)">geometry</div><div class="ic icl" style="left:416px;top:262.5px"><i style="position:absolute;left:0.8px;top:1.3px;width:5.9px;height:5.2px;background:repeating-linear-gradient(#6e7b8c 0 1px,#a3aebd 1px 1.7px)"></i></div><div class="rd" style="left:421.3px;top:262.2px"></div><div style="position:absolute;left:425.3px;top:260.25px;width:37.6px;height:12.5px;background:#9d96db"></div><div class="t" style="left:426.8px;top:261.9px;transform:scaleX(0.9269)">holdingId</div><div class="ic icl" style="left:416px;top:275.0px"><i style="position:absolute;left:1px;top:2.5px;width:5.5px;height:4.5px;background:repeating-linear-gradient(#6a788a 0 1px,#9aa6b6 1px 1.6px)"></i></div><div style="position:absolute;left:415px;top:274.0px;width:0;height:0;border-top:4px solid #b85a20;border-right:4px solid transparent"></div><div style="position:absolute;left:425.3px;top:272.75px;width:29.4px;height:12.5px;background:#9bc883"></div><div class="t" style="left:426.8px;top:274.4px;transform:scaleX(0.8455)">id <span style="color:#4a9ed6">(0..1)</span></div><svg class="sv" style="left:406px;top:288.5px" width="5" height="6"><path d="M1.2 0.8 L3.6 3 L1.2 5.2" stroke="#9a9a9a" stroke-width="0.85" fill="none"/></svg><div class="ic icl" style="left:416px;top:287.5px"><i style="position:absolute;left:0.8px;top:1.3px;width:5.9px;height:5.2px;background:repeating-linear-gradient(#6e7b8c 0 1px,#a3aebd 1px 1.7px)"></i></div><div class="t" style="left:426.8px;top:286.9px;transform:scaleX(0.8796)">identifier <span style="color:#4a9ed6">(0..1)</span></div><svg class="sv" style="left:406px;top:301.0px" width="5" height="6"><path d="M1.2 0.8 L3.6 3 L1.2 5.2" stroke="#9a9a9a" stroke-width="0.85" fill="none"/></svg><div class="ic icg" style="left:416px;top:300.0px"><i style="position:absolute;left:0;top:0;width:100%;height:1.4px;background:#3a78c8"></i><i class="sq" style="left:3px;top:2.6px"></i><i class="sq" style="left:0.9px;top:5px"></i><i class="sq" style="left:5.1px;top:5px"></i></div><div class="t" style="left:426.8px;top:299.4px;transform:scaleX(0.8541)">localisedCatchCrop <span style="color:#4a9ed6">(0..1)</span></div><svg class="sv" style="left:406px;top:313.5px" width="5" height="6"><path d="M1.2 0.8 L3.6 3 L1.2 5.2" stroke="#9a9a9a" stroke-width="0.85" fill="none"/></svg><div class="ic icg" style="left:416px;top:312.5px"><i style="position:absolute;left:0;top:0;width:100%;height:1.4px;background:#3a78c8"></i><i class="sq" style="left:3px;top:2.6px"></i><i class="sq" style="left:0.9px;top:5px"></i><i class="sq" style="left:5.1px;top:5px"></i></div><div class="t" style="left:426.8px;top:311.9px;transform:scaleX(0.8656)">localisedMainCrop <span style="color:#4a9ed6">(0..1)</span></div><svg class="sv" style="left:406px;top:326.0px" width="5" height="6"><path d="M1.2 0.8 L3.6 3 L1.2 5.2" stroke="#9a9a9a" stroke-width="0.85" fill="none"/></svg><div class="ic icg" style="left:416px;top:325.0px"><i style="position:absolute;left:0;top:0;width:100%;height:1.4px;background:#3a78c8"></i><i class="sq" style="left:3px;top:2.6px"></i><i class="sq" style="left:0.9px;top:5px"></i><i class="sq" style="left:5.1px;top:5px"></i></div><div class="rd" style="left:421.3px;top:324.7px"></div><div style="position:absolute;left:425.3px;top:322.75px;width:38.3px;height:12.5px;background:#dede50"></div><div class="t" style="left:426.8px;top:324.4px;transform:scaleX(0.8840)">mainCrop</div><svg class="sv" style="left:406px;top:338.5px" width="5" height="6"><path d="M1.2 0.8 L3.6 3 L1.2 5.2" stroke="#9a9a9a" stroke-width="0.85" fill="none"/></svg><div class="ic icg" style="left:416px;top:337.5px"><i style="position:absolute;left:0;top:0;width:100%;height:1.4px;background:#3a78c8"></i><i class="sq" style="left:3px;top:2.6px"></i><i class="sq" style="left:0.9px;top:5px"></i><i class="sq" style="left:5.1px;top:5px"></i></div><div class="t" style="left:426.8px;top:336.9px;transform:scaleX(0.8680)">metaDataProperty <span style="color:#4a9ed6">(0..n)</span></div><svg class="sv" style="left:406px;top:351.0px" width="5" height="6"><path d="M1.2 0.8 L3.6 3 L1.2 5.2" stroke="#9a9a9a" stroke-width="0.85" fill="none"/></svg><div class="ic icl" style="left:416px;top:350.0px"><i style="position:absolute;left:0.8px;top:1.3px;width:5.9px;height:5.2px;background:repeating-linear-gradient(#6e7b8c 0 1px,#a3aebd 1px 1.7px)"></i></div><div class="t" style="left:426.8px;top:349.4px;transform:scaleX(0.8480)">name <span style="color:#4a9ed6">(0..n)</span></div><div class="ic icl" style="left:416px;top:362.5px"><i style="position:absolute;left:0.8px;top:1.3px;width:5.9px;height:5.2px;background:repeating-linear-gradient(#6e7b8c 0 1px,#a3aebd 1px 1.7px)"></i></div><div class="rd" style="left:421.3px;top:362.2px"></div><div style="position:absolute;left:425.3px;top:360.25px;width:59.4px;height:12.5px;background:#9bc883"></div><div class="t" style="left:426.8px;top:361.9px;transform:scaleX(0.8821)">organicFarming</div><svg class="sv" style="left:406px;top:376.0px" width="5" height="6"><path d="M1.2 0.8 L3.6 3 L1.2 5.2" stroke="#9a9a9a" stroke-width="0.85" fill="none"/></svg><div class="ic icg" style="left:416px;top:375.0px"><i style="position:absolute;left:0;top:0;width:100%;height:1.4px;background:#3a78c8"></i><i class="sq" style="left:3px;top:2.6px"></i><i class="sq" style="left:0.9px;top:5px"></i><i class="sq" style="left:5.1px;top:5px"></i></div><div class="rd" style="left:421.3px;top:374.7px"></div><div style="position:absolute;left:425.3px;top:372.75px;width:37.4px;height:12.5px;background:#dede50"></div><div class="t" style="left:426.8px;top:374.4px;transform:scaleX(0.8401)">relatedRP</div><div class="ic icl" style="left:416px;top:387.5px"><span class="g8">8</span></div><div class="rd" style="left:421.3px;top:387.2px"></div><div style="position:absolute;left:425.3px;top:385.25px;width:38.4px;height:12.5px;background:#9d96db"></div><div class="t" style="left:426.8px;top:386.9px;transform:scaleX(0.8772)">validFrom</div><div class="ic icl" style="left:416px;top:400.0px"><span class="g8">8</span></div><div style="position:absolute;left:425.3px;top:397.75px;width:48.5px;height:12.5px;background:#9d96db"></div><div class="t" style="left:426.8px;top:399.4px;transform:scaleX(0.8633)">validTo <span style="color:#4a9ed6">(0..1)</span></div><svg class="sv" style="left:394px;top:413.5px" width="5" height="6"><path d="M1.2 0.8 L3.6 3 L1.2 5.2" stroke="#9a9a9a" stroke-width="0.85" fill="none"/></svg><div class="ic icb" style="left:404.8px;top:412.5px"><svg width="9" height="9" style="position:absolute;left:-0.5px;top:-0.5px"><path d="M2.9 7.6 L2.9 2.6 Q2.9 1.3 4.3 1.4 M1.5 3.6 L4.3 3.6 M5.6 1.6 L5.6 6.3 Q5.6 7.3 7 7.1 M4.6 3.6 L7.2 3.6" stroke="#5d6a7c" stroke-width="1.05" fill="none"/></svg></div><div class="t" style="left:415.7px;top:411.9px;transform:scaleX(0.8405)">EcoLandscapeElement</div><svg class="sv" style="left:394px;top:426.0px" width="5" height="6"><path d="M1.2 0.8 L3.6 3 L1.2 5.2" stroke="#9a9a9a" stroke-width="0.85" fill="none"/></svg><div class="ic icb" style="left:404.8px;top:425.0px"><svg width="9" height="9" style="position:absolute;left:-0.5px;top:-0.5px"><path d="M2.9 7.6 L2.9 2.6 Q2.9 1.3 4.3 1.4 M1.5 3.6 L4.3 3.6 M5.6 1.6 L5.6 6.3 Q5.6 7.3 7 7.1 M4.6 3.6 L7.2 3.6" stroke="#5d6a7c" stroke-width="1.05" fill="none"/></svg></div><div class="t" style="left:415.7px;top:424.4px;transform:scaleX(0.8463)">EcologicalFocusArea</div><svg class="sv" style="left:394px;top:438.5px" width="5" height="6"><path d="M1.2 0.8 L3.6 3 L1.2 5.2" stroke="#9a9a9a" stroke-width="0.85" fill="none"/></svg><div class="ic icb" style="left:404.8px;top:437.5px"><svg width="8" height="8" style="position:absolute;left:-0.5px;top:-0.5px"><path d="M1.5 2 L6.5 2 M4 2 L4 6.8 M3 6.8 L5 6.8" stroke="#5d6a7c" stroke-width="1.05"/></svg></div><div class="t" style="left:415.7px;top:436.9px;transform:scaleX(0.8470)">FarmAnimalSpecies</div><svg class="sv" style="left:394px;top:451.0px" width="5" height="6"><path d="M1.2 0.8 L3.6 3 L1.2 5.2" stroke="#9a9a9a" stroke-width="0.85" fill="none"/></svg><div class="ic icb" style="left:404.8px;top:450.0px"><svg width="9" height="9" style="position:absolute;left:-0.5px;top:-0.5px"><path d="M2.9 7.6 L2.9 2.6 Q2.9 1.3 4.3 1.4 M1.5 3.6 L4.3 3.6 M5.6 1.6 L5.6 6.3 Q5.6 7.3 7 7.1 M4.6 3.6 L7.2 3.6" stroke="#5d6a7c" stroke-width="1.05" fill="none"/></svg></div><div class="t" style="left:415.7px;top:449.4px;transform:scaleX(0.8864)">NonAgriculturalEligibleArea</div><svg class="sv" style="left:395px;top:464.5px" width="6" height="5"><path d="M0.8 1.2 L3 3.6 L5.2 1.2" stroke="#555" stroke-width="1.1" fill="none"/></svg><div class="ic icb" style="left:404.8px;top:462.5px"><svg width="9" height="9" style="position:absolute;left:-0.5px;top:-0.5px"><path d="M2.9 7.6 L2.9 2.6 Q2.9 1.3 4.3 1.4 M1.5 3.6 L4.3 3.6 M5.6 1.6 L5.6 6.3 Q5.6 7.3 7 7.1 M4.6 3.6 L7.2 3.6" stroke="#5d6a7c" stroke-width="1.05" fill="none"/></svg></div><div style="position:absolute;left:414.2px;top:460.25px;width:60.3px;height:12.5px;background:#7eb35d"></div><div class="t" style="left:415.7px;top:461.9px;transform:scaleX(0.8362)">ReferenceParcel</div><svg class="sv" style="left:406px;top:476.0px" width="5" height="6"><path d="M1.2 0.8 L3.6 3 L1.2 5.2" stroke="#9a9a9a" stroke-width="0.85" fill="none"/></svg><svg class="sv" style="left:416px;top:475.0px" width="10" height="10"><rect x="0.3" y="0.5" width="7.2" height="7.2" fill="#e6b27a" stroke="#d0904e" stroke-width="0.5"/><path d="M3.5 0.5 L3.5 7.7 M0.3 3.7 L7.5 3.7" stroke="#b8783a" stroke-width="0.8"/><circle cx="6" cy="6.4" r="2.7" fill="#c4daf4" stroke="#7ea4d8" stroke-width="0.6"/><path d="M6 3.9 L6 8.9 M4.5 5.5 Q6 7 7.5 5.5" stroke="#6a94cc" stroke-width="0.6" fill="none"/></svg><div class="t" style="left:426.8px;top:474.4px;transform:scaleX(0.8700)">location <span style="color:#4a9ed6">(0..1)</span></div><div class="ic icl" style="left:416px;top:487.5px"><span class="g8">8</span></div><div class="rd" style="left:421.3px;top:487.2px"></div><div style="position:absolute;left:425.3px;top:485.25px;width:80.2px;height:12.5px;background:#9d96db"></div><div class="t" style="left:426.8px;top:486.9px;transform:scaleX(0.8780)">beginLifespanVersion</div><svg class="sv" style="left:406px;top:501.0px" width="5" height="6"><path d="M1.2 0.8 L3.6 3 L1.2 5.2" stroke="#9a9a9a" stroke-width="0.85" fill="none"/></svg><div class="ic icg" style="left:416px;top:500.0px"><i style="position:absolute;left:0;top:0;width:100%;height:1.4px;background:#3a78c8"></i><i class="sq" style="left:3px;top:2.6px"></i><i class="sq" style="left:0.9px;top:5px"></i><i class="sq" style="left:5.1px;top:5px"></i></div><div class="t" style="left:426.8px;top:499.4px;transform:scaleX(0.8623)">boundedBy <span style="color:#4a9ed6">(0..1)</span></div><svg class="sv" style="left:406px;top:513.5px" width="5" height="6"><path d="M1.2 0.8 L3.6 3 L1.2 5.2" stroke="#9a9a9a" stroke-width="0.85" fill="none"/></svg><div class="ic icl" style="left:416px;top:512.5px"><i style="position:absolute;left:0.8px;top:1.3px;width:5.9px;height:5.2px;background:repeating-linear-gradient(#6e7b8c 0 1px,#a3aebd 1px 1.7px)"></i></div><div class="t" style="left:426.8px;top:511.9px;transform:scaleX(0.8723)">description <span style="color:#4a9ed6">(0..1)</span></div><svg class="sv" style="left:406px;top:526.0px" width="5" height="6"><path d="M1.2 0.8 L3.6 3 L1.2 5.2" stroke="#9a9a9a" stroke-width="0.85" fill="none"/></svg><div class="ic icg" style="left:416px;top:525.0px"><i style="position:absolute;left:0;top:0;width:100%;height:1.4px;background:#3a78c8"></i><i class="sq" style="left:3px;top:2.6px"></i><i class="sq" style="left:0.9px;top:5px"></i><i class="sq" style="left:5.1px;top:5px"></i></div><div class="t" style="left:426.8px;top:524.4px;transform:scaleX(0.8606)">descriptionReference <span style="color:#4a9ed6">(0..1)</span></div><div class="ic icl" style="left:416px;top:537.5px"><span class="g8">8</span></div><div class="t" style="left:426.8px;top:536.9px;transform:scaleX(0.8591)">endLifespanVersion <span style="color:#4a9ed6">(0..1)</span></div><svg class="sv" style="left:406px;top:551.0px" width="5" height="6"><path d="M1.2 0.8 L3.6 3 L1.2 5.2" stroke="#9a9a9a" stroke-width="0.85" fill="none"/></svg><div class="ic icg" style="left:416px;top:550.0px"><i style="position:absolute;left:0;top:0;width:100%;height:1.4px;background:#3a78c8"></i><i class="sq" style="left:3px;top:2.6px"></i><i class="sq" style="left:0.9px;top:5px"></i><i class="sq" style="left:5.1px;top:5px"></i></div><div class="rd" style="left:421.3px;top:549.7px"></div><div style="position:absolute;left:425.3px;top:547.75px;width:37.7px;height:12.5px;background:#9bc883"></div><div class="t" style="left:426.8px;top:549.4px;transform:scaleX(0.9061)">geometry</div><div class="ic icl" style="left:416px;top:562.5px"><i style="position:absolute;left:1px;top:2.5px;width:5.5px;height:4.5px;background:repeating-linear-gradient(#6a788a 0 1px,#9aa6b6 1px 1.6px)"></i></div><div style="position:absolute;left:415px;top:561.5px;width:0;height:0;border-top:4px solid #b85a20;border-right:4px solid transparent"></div><div style="position:absolute;left:425.3px;top:560.25px;width:29.4px;height:12.5px;background:#9bc883"></div><div class="t" style="left:426.8px;top:561.9px;transform:scaleX(0.8455)">id <span style="color:#4a9ed6">(0..1)</span></div><svg class="sv" style="left:406px;top:576.0px" width="5" height="6"><path d="M1.2 0.8 L3.6 3 L1.2 5.2" stroke="#9a9a9a" stroke-width="0.85" fill="none"/></svg><div class="ic icl" style="left:416px;top:575.0px"><i style="position:absolute;left:0.8px;top:1.3px;width:5.9px;height:5.2px;background:repeating-linear-gradient(#6e7b8c 0 1px,#a3aebd 1px 1.7px)"></i></div><div class="t" style="left:426.8px;top:574.4px;transform:scaleX(0.8796)">identifier <span style="color:#4a9ed6">(0..1)</span></div><svg class="sv" style="left:406px;top:588.5px" width="5" height="6"><path d="M1.2 0.8 L3.6 3 L1.2 5.2" stroke="#9a9a9a" stroke-width="0.85" fill="none"/></svg><div class="ic icg" style="left:416px;top:587.5px"><i style="position:absolute;left:0;top:0;width:100%;height:1.4px;background:#3a78c8"></i><i class="sq" style="left:3px;top:2.6px"></i><i class="sq" style="left:0.9px;top:5px"></i><i class="sq" style="left:5.1px;top:5px"></i></div><div class="t" style="left:426.8px;top:586.9px;transform:scaleX(0.8680)">metaDataProperty <span style="color:#4a9ed6">(0..n)</span></div><svg class="sv" style="left:406px;top:601.0px" width="5" height="6"><path d="M1.2 0.8 L3.6 3 L1.2 5.2" stroke="#9a9a9a" stroke-width="0.85" fill="none"/></svg><div class="ic icl" style="left:416px;top:600.0px"><i style="position:absolute;left:0.8px;top:1.3px;width:5.9px;height:5.2px;background:repeating-linear-gradient(#6e7b8c 0 1px,#a3aebd 1px 1.7px)"></i></div><div class="t" style="left:426.8px;top:599.4px;transform:scaleX(0.8480)">name <span style="color:#4a9ed6">(0..n)</span></div><div style="position:absolute;left:425.2px;top:612.5px;width:57px;height:1.8px;background:#dede50"></div><div style="position:absolute;left:416px;top:612.5px;width:8px;height:1.8px;background:#6a88c0"></div><div style="position:absolute;left:761px;top:42px;width:2px;height:580px;background:#e0e4f6"></div><div style="position:absolute;left:762px;top:42px;width:540px;height:17px;background:#f3f4f9;border-top-left-radius:5px"></div><div style="position:absolute;left:762px;top:58px;width:540px;height:563px;background:#ffffff;border-left:1px solid #e6e8f0;border-bottom:1px solid #d4d6de"></div><div style="position:absolute;left:764px;top:42.5px;width:65px;height:16px;background:#eff1f6;border-top-left-radius:5px;border-top-right-radius:5px"></div><svg class="sv" style="left:767px;top:46px" width="8" height="9"><path d="M1 4 Q4 0 7 4" stroke="#d0a040" stroke-width="1.2" fill="#f0e0a0"/><ellipse cx="4" cy="5.5" rx="3.6" ry="2.2" fill="#1f4fd8"/></svg><div class="t" style="left:777px;top:46px;color:#333;transform:scaleX(0.9082)">Alignment</div><svg class="sv" style="left:818px;top:47px" width="7" height="7"><path d="M1 1 L6 6 M6 1 L1 6" stroke="#b8bcc8" stroke-width="1"/><circle cx="3.5" cy="3.5" r="1.6" fill="none" stroke="#c8ccd6" stroke-width="0.7"/></svg><svg class="sv" style="left:1186px;top:44px" width="10" height="10"><rect x="3.5" y="0.5" width="3" height="3" fill="#fff" stroke="#8a98b0"/><rect x="0.5" y="6" width="9" height="3" fill="#fff" stroke="#8a98b0"/><path d="M5 3.5 L5 6" stroke="#8a98b0"/></svg><svg class="sv" style="left:1198.5px;top:44.5px" width="10" height="10"><path d="M0.5 4 L0.5 9 L9 9 L9 5" stroke="#4a6aa8" stroke-width="1.3" fill="#b8c8e8"/><path d="M3 6 L7 2" stroke="#4a6aa8" stroke-width="1"/><circle cx="7.5" cy="1.5" r="1.2" fill="#2a6ab8"/></svg><div style="position:absolute;left:1210px;top:43px;width:49.5px;height:11.5px;background:#cfe5fa;border-radius:2px"></div><div style="position:absolute;left:1222.8px;top:43px;width:0.6px;height:11.5px;background:#e6f2fd"></div><div style="position:absolute;left:1234.7px;top:43px;width:0.6px;height:11.5px;background:#e6f2fd"></div><div style="position:absolute;left:1247px;top:43px;width:0.6px;height:11.5px;background:#e6f2fd"></div><svg class="sv" style="left:1213px;top:46px" width="7" height="6"><path d="M0.5 0.5 L4 0.5 L6.5 2.8 L4 5.3 L0.5 5.3Z" fill="#0a5a6a"/></svg><svg class="sv" style="left:1224px;top:44px" width="10" height="10"><path d="M1 0.5 L4 3" stroke="#2a3a8a" stroke-width="1"/><path d="M3 3 L9 3 L9 7.5 L3 7.5Z" fill="#2030e0"/><path d="M2 9 L9 9" stroke="#8a8ac0"/><path d="M5 1 L9 1" stroke="#e0c050"/></svg><svg class="sv" style="left:1237px;top:45px" width="8" height="8"><path d="M1 1 L7 7 M7 1 L1 7" stroke="#666" stroke-width="2.2"/></svg><svg class="sv" style="left:1250px;top:44.5px" width="7" height="9"><path d="M3.5 8.5 L3.5 1.5 M1 4 L3.5 1 L6 4" stroke="#3a3ad0" stroke-width="1.1" fill="none"/></svg><div style="position:absolute;left:1266.5px;top:45px;width:2.2px;height:2.2px;border:0.7px solid #888;border-radius:50%"></div><div style="position:absolute;left:1266.5px;top:48px;width:2.2px;height:2.2px;border:0.7px solid #888;border-radius:50%"></div><div style="position:absolute;left:1266.5px;top:51px;width:2.2px;height:2.2px;border:0.7px solid #888;border-radius:50%"></div><div style="position:absolute;left:1276px;top:47px;width:5.5px;height:2.5px;border:1px solid #777;background:#fff"></div><div style="position:absolute;left:1289px;top:46px;width:6px;height:6px;border:1px solid #777;border-top-width:2px;background:#fff"></div><div style="position:absolute;left:767.5px;top:62px;width:232.5px;height:16px;background:#fff;border:1px solid #b8b8b8"></div><div class="ic icb" style="left:771px;top:66px"><svg width="8" height="8" style="position:absolute;left:-0.5px;top:-0.5px"><path d="M1.5 2 L6.5 2 M4 2 L4 6.8 M3 6.8 L5 6.8" stroke="#5d6a7c" stroke-width="1.05"/></svg></div><div class="t" style="left:781px;top:65.7px;color:#222;transform:scaleX(0.8602)">Landbouwgebruikspercelen_2024_-_Definitief_(extractie_27-</div><div style="position:absolute;left:1003.5px;top:62.5px;width:41.5px;height:15px;background:#fdfdfd;border:1px solid #e0e0e0;border-bottom-color:#cfcfcf;border-radius:2px"></div><div class="t" style="left:1011.5px;top:65.9px;color:#333;transform:scaleX(0.8507)">Retype</div><div style="position:absolute;left:1049px;top:62.5px;width:14.5px;height:15px;background:#fdfdfd;border:1px solid #e0e0e0;border-bottom-color:#cfcfcf;border-radius:2px"></div><svg class="sv" style="left:1052px;top:66px" width="8" height="8"><path d="M1.3 1.3 L6.7 6.7 M6.7 1.3 L1.3 6.7" stroke="#e8303a" stroke-width="2"/></svg><div style="position:absolute;left:1066px;top:62px;width:233.5px;height:16px;background:#fff;border:1px solid #b8b8b8"></div><div class="ic icb" style="left:1070px;top:66px"><svg width="9" height="9" style="position:absolute;left:-0.5px;top:-0.5px"><path d="M2.9 7.6 L2.9 2.6 Q2.9 1.3 4.3 1.4 M1.5 3.6 L4.3 3.6 M5.6 1.6 L5.6 6.3 Q5.6 7.3 7 7.1 M4.6 3.6 L7.2 3.6" stroke="#5d6a7c" stroke-width="1.05" fill="none"/></svg></div><div class="t" style="left:1079.5px;top:65.7px;color:#222;transform:scaleX(0.8362)">ReferenceParcel</div><div style="position:absolute;left:765px;top:86px;width:536px;height:534px;background:#fff;border:1px solid #d8d8d8"></div><svg class="sv" style="left:0;top:0" width="1302" height="622"><path d="M936.6 95.6 L997.5 95.6" stroke="#cfcfcf" stroke-width="1" fill="none"/><path d="M1055.9 95.6 L1165.5 95.8" stroke="#cfcfcf" stroke-width="1" fill="none"/><path d="M870.4 155.7 L1000 117.1" stroke="#cfcfcf" stroke-width="1" fill="none"/><path d="M870.4 155.9 L984.4 133.8" stroke="#cfcfcf" stroke-width="1" fill="none"/><path d="M871.5 159 L984.4 150.5" stroke="#cfcfcf" stroke-width="1" fill="none"/><path d="M871 161.5 L983 161.5" stroke="#cfcfcf" stroke-width="1" fill="none"/><path d="M1054 112 L1186.3 112" stroke="#cfcfcf" stroke-width="1" fill="none"/><path d="M1069.2 128.3 L1190.5 128.6" stroke="#cfcfcf" stroke-width="1" fill="none"/><path d="M1069.2 144.8 L1169.4 145" stroke="#cfcfcf" stroke-width="1" fill="none"/><path d="M1069.2 161.3 L1169.4 161.4" stroke="#cfcfcf" stroke-width="1" fill="none"/><path d="M869.5 177.5 L998.7 177.6" stroke="#cfcfcf" stroke-width="1" fill="none"/><path d="M1054 177.6 L1177.2 177.8" stroke="#cfcfcf" stroke-width="1" fill="none"/><path d="M1051.6 193.8 L1155.9 193.7" stroke="#cfcfcf" stroke-width="1" fill="none"/><path d="M1051.6 210.3 L1176 210.4" stroke="#cfcfcf" stroke-width="1" fill="none"/><path d="M1051.6 226.7 L1181 226.8" stroke="#cfcfcf" stroke-width="1" fill="none"/><path d="M765.5 88.89999999999999 L931.6 88.89999999999999 L936.6 95.6 L931.6 102.3 L765.5 102.3Z" fill="#bee5a2" stroke="#bee5a2" stroke-width="0.8"/><path d="M828.2 154.10000000000002 L865.9 154.10000000000002 L870.9 160.8 L865.9 167.5 L828.2 167.5Z" fill="#e1f6d2" stroke="#c3e2ad" stroke-width="0.8"/><path d="M829.8 170.60000000000002 L864.5 170.60000000000002 L869.5 177.3 L864.5 184.0 L829.8 184.0Z" fill="#e1f6d2" stroke="#c3e2ad" stroke-width="0.8"/><path d="M997.5 95.6 L1002.5 88.89999999999999 L1050.9 88.89999999999999 L1055.9 95.6 L1050.9 102.3 L1002.5 102.3Z" fill="#d7e4f6" stroke="#bfd0ea" stroke-width="0.8"/><circle cx="1006" cy="95.8" r="1.7" fill="#4aa85a"/><path d="M998.8 112 L1003.8 105.3 L1049 105.3 L1054 112 L1049 118.7 L1003.8 118.7Z" fill="#d7e4f6" stroke="#bfd0ea" stroke-width="0.8"/><path d="M1007 109 L1007 115.5" stroke="#4a5a90" stroke-width="1.6" stroke-dasharray="1 0.6"/><path d="M1009 109.3 L1013 109.3 M1009 111.3 L1013 111.3 M1009 113.3 L1013 113.3 M1009 115.3 L1013 115.3" stroke="#5a6aa0" stroke-width="0.7"/><path d="M983.4 128.3 L988.4 121.60000000000001 L1064.2 121.60000000000001 L1069.2 128.3 L1064.2 135.0 L988.4 135.0Z" fill="#d7e4f6" stroke="#bfd0ea" stroke-width="0.8"/><path d="M983.4 144.8 L988.4 138.10000000000002 L1064.2 138.10000000000002 L1069.2 144.8 L1064.2 151.5 L988.4 151.5Z" fill="#d7e4f6" stroke="#bfd0ea" stroke-width="0.8"/><path d="M983.4 161.3 L988.4 154.60000000000002 L1064.2 154.60000000000002 L1069.2 161.3 L1064.2 168.0 L988.4 168.0Z" fill="#d7e4f6" stroke="#bfd0ea" stroke-width="0.8"/><path d="M998.7 177.6 L1003.7 170.9 L1049 170.9 L1054 177.6 L1049 184.29999999999998 L1003.7 184.29999999999998Z" fill="#d7e4f6" stroke="#bfd0ea" stroke-width="0.8"/><path d="M1007 174.6 L1007 181.1" stroke="#4a5a90" stroke-width="1.6" stroke-dasharray="1 0.6"/><path d="M1009 174.9 L1013 174.9 M1009 176.9 L1013 176.9 M1009 178.9 L1013 178.9 M1009 180.9 L1013 180.9" stroke="#5a6aa0" stroke-width="0.7"/><path d="M1001.8 193.8 L1006.8 187.10000000000002 L1046.6 187.10000000000002 L1051.6 193.8 L1046.6 200.5 L1006.8 200.5Z" fill="#d7e4f6" stroke="#bfd0ea" stroke-width="0.8"/><path d="M1010.6 191.60000000000002 L1013.3 191.60000000000002 L1015.4 193.8 L1013.3 196.0 L1010.6 196.0Z" fill="#0d6470" stroke="#1a3a7a" stroke-width="0.4"/><path d="M1001.8 210.3 L1006.8 203.60000000000002 L1046.6 203.60000000000002 L1051.6 210.3 L1046.6 217.0 L1006.8 217.0Z" fill="#d7e4f6" stroke="#bfd0ea" stroke-width="0.8"/><path d="M1010.6 208.10000000000002 L1013.3 208.10000000000002 L1015.4 210.3 L1013.3 212.5 L1010.6 212.5Z" fill="#0d6470" stroke="#1a3a7a" stroke-width="0.4"/><path d="M1001.8 226.7 L1006.8 220.0 L1046.6 220.0 L1051.6 226.7 L1046.6 233.39999999999998 L1006.8 233.39999999999998Z" fill="#d7e4f6" stroke="#bfd0ea" stroke-width="0.8"/><path d="M1010.6 224.5 L1013.3 224.5 L1015.4 226.7 L1013.3 228.89999999999998 L1010.6 228.89999999999998Z" fill="#0d6470" stroke="#1a3a7a" stroke-width="0.4"/><path d="M1165.5 95.8 L1170.5 89.1 L1240.9 89.1 L1240.9 102.5 L1170.5 102.5Z" fill="#bee5a2" stroke="#a8d68a" stroke-width="0.8"/><path d="M1186.3 112 L1191.3 105.3 L1220.8 105.3 L1220.8 118.7 L1191.3 118.7Z" fill="#e1f6d2" stroke="#c3e2ad" stroke-width="0.8"/><path d="M1190.5 128.6 L1195.5 121.89999999999999 L1215.7 121.89999999999999 L1215.7 135.29999999999998 L1195.5 135.29999999999998Z" fill="#e1f6d2" stroke="#c3e2ad" stroke-width="0.8"/><path d="M1169.4 145 L1174.4 138.3 L1238 138.3 L1238 151.7 L1174.4 151.7Z" fill="#e1f6d2" stroke="#c3e2ad" stroke-width="0.8"/><path d="M1169.4 161.4 L1174.4 154.70000000000002 L1238 154.70000000000002 L1238 168.1 L1174.4 168.1Z" fill="#e1f6d2" stroke="#c3e2ad" stroke-width="0.8"/><path d="M1177.2 177.8 L1182.2 171.10000000000002 L1229.7 171.10000000000002 L1229.7 184.5 L1182.2 184.5Z" fill="#e1f6d2" stroke="#c3e2ad" stroke-width="0.8"/><path d="M1155.9 193.6 L1160.9 186.9 L1250.5 186.9 L1250.5 200.29999999999998 L1160.9 200.29999999999998Z" fill="#e1f6d2" stroke="#c3e2ad" stroke-width="0.8"/><path d="M1176 210.3 L1181 203.60000000000002 L1230.5 203.60000000000002 L1230.5 217.0 L1181 217.0Z" fill="#e1f6d2" stroke="#c3e2ad" stroke-width="0.8"/><path d="M1181 226.7 L1186 220.0 L1226 220.0 L1226 233.39999999999998 L1186 233.39999999999998Z" fill="#e1f6d2" stroke="#c3e2ad" stroke-width="0.8"/></svg><div class="ic icb" style="left:767px;top:91.6px"><svg width="8" height="8" style="position:absolute;left:-0.5px;top:-0.5px"><path d="M1.5 2 L6.5 2 M4 2 L4 6.8 M3 6.8 L5 6.8" stroke="#5d6a7c" stroke-width="1.05"/></svg></div><div class="ic icl" style="left:830.2px;top:156.5px"><span class="g8">8</span></div><div class="ic icl" style="left:832px;top:173.2px"><i style="position:absolute;left:1px;top:1.2px;width:5.6px;height:5.6px;border:1.8px solid #3a4f6a;border-radius:50%"></i><i style="position:absolute;left:-1px;top:-1px;width:0;height:0;border-left:4px solid #2a9a3a;border-top:2px solid transparent;border-bottom:2px solid transparent"></i></div><div class="ic icb" style="left:1012px;top:91.6px"><svg width="8" height="8" style="position:absolute;left:-0.5px;top:-0.5px"><path d="M1.5 2 L6.5 2 M4 2 L4 6.8 M3 6.8 L5 6.8" stroke="#5d6a7c" stroke-width="1.05"/></svg></div><div class="ic icb" style="left:1172.5px;top:91.8px"><svg width="9" height="9" style="position:absolute;left:-0.5px;top:-0.5px"><path d="M2.9 7.6 L2.9 2.6 Q2.9 1.3 4.3 1.4 M1.5 3.6 L4.3 3.6 M5.6 1.6 L5.6 6.3 Q5.6 7.3 7 7.1 M4.6 3.6 L7.2 3.6" stroke="#5d6a7c" stroke-width="1.05" fill="none"/></svg></div><div class="ic icl" style="left:1193.1px;top:108px"><i style="position:absolute;left:0.8px;top:1.3px;width:5.9px;height:5.2px;background:repeating-linear-gradient(#6e7b8c 0 1px,#a3aebd 1px 1.7px)"></i></div><div class="rd" style="left:1198.3999999999999px;top:107.7px"></div><div class="ic icl" style="left:1197.3px;top:124.6px"><i style="position:absolute;left:1px;top:2.5px;width:5.5px;height:4.5px;background:repeating-linear-gradient(#6a788a 0 1px,#9aa6b6 1px 1.6px)"></i></div><div style="position:absolute;left:1196.3px;top:123.6px;width:0;height:0;border-top:4px solid #b85a20;border-right:4px solid transparent"></div><div class="ic icl" style="left:1176.2px;top:141px"><i style="position:absolute;left:1px;top:2.5px;width:5.5px;height:4.5px;background:repeating-linear-gradient(#6a788a 0 1px,#9aa6b6 1px 1.6px)"></i></div><div style="position:absolute;left:1175.2px;top:140px;width:0;height:0;border-top:4px solid #b85a20;border-right:4px solid transparent"></div><div class="ic icl" style="left:1176.2px;top:157.4px"><i style="position:absolute;left:1px;top:2.5px;width:5.5px;height:4.5px;background:repeating-linear-gradient(#6a788a 0 1px,#9aa6b6 1px 1.6px)"></i></div><div style="position:absolute;left:1175.2px;top:156.4px;width:0;height:0;border-top:4px solid #b85a20;border-right:4px solid transparent"></div><div class="ic icg" style="left:1184.0px;top:173.8px"><i style="position:absolute;left:0;top:0;width:100%;height:1.4px;background:#3a78c8"></i><i class="sq" style="left:3px;top:2.6px"></i><i class="sq" style="left:0.9px;top:5px"></i><i class="sq" style="left:5.1px;top:5px"></i></div><div class="rd" style="left:1189.3px;top:173.5px"></div><div class="ic icl" style="left:1162.7px;top:189.6px"><span class="g8">8</span></div><div class="rd" style="left:1168.0px;top:189.29999999999998px"></div><div class="ic icl" style="left:1182.8px;top:206.3px"><span class="g8">8</span></div><div class="rd" style="left:1188.1px;top:206.0px"></div><div class="ic icl" style="left:1187.8px;top:222.7px"><span class="g8">8</span></div><div class="t" style="left:776.6px;top:91.20px;color:#22607e;transform:scaleX(0.8349)">..-_Definitief_(extractie_27-03-2025)_GPKG</div><div class="t" style="left:840.4px;top:156.40px;color:#22607e;transform:scaleX(0.7278)">REF_ID</div><div class="t" style="left:842px;top:172.90px;color:#22607e;transform:scaleX(0.9073)">geom</div><div class="t" style="left:1021.8px;top:91.20px;color:#35619a;transform:scaleX(0.8507)">Retype</div><div class="t" style="left:1015.5px;top:107.60px;color:#35619a;transform:scaleX(0.8380)">Rename</div><div style="position:absolute;left:989.5px;top:124.10px;font-size:6.6px;line-height:10px;font-weight:bold;letter-spacing:-0.4px;white-space:nowrap"><span style="color:#e04848">a</span><span style="color:#40a848">b</span><span style="color:#5058c8">c</span></div><div class="t" style="left:1000.6px;top:123.90px;color:#35619a;transform:scaleX(0.8958)">Formatted string</div><div style="position:absolute;left:989.5px;top:140.60px;font-size:6.6px;line-height:10px;font-weight:bold;letter-spacing:-0.4px;white-space:nowrap"><span style="color:#e04848">a</span><span style="color:#40a848">b</span><span style="color:#5058c8">c</span></div><div class="t" style="left:1000.6px;top:140.40px;color:#35619a;transform:scaleX(0.8958)">Formatted string</div><div style="position:absolute;left:989.5px;top:157.10px;font-size:6.6px;line-height:10px;font-weight:bold;letter-spacing:-0.4px;white-space:nowrap"><span style="color:#e04848">a</span><span style="color:#40a848">b</span><span style="color:#5058c8">c</span></div><div class="t" style="left:1000.6px;top:156.90px;color:#35619a;transform:scaleX(0.8958)">Formatted string</div><div class="t" style="left:1015.5px;top:173.20px;color:#35619a;transform:scaleX(0.8380)">Rename</div><div class="t" style="left:1018.9px;top:189.40px;color:#35619a;transform:scaleX(0.8527)">Assign</div><div class="t" style="left:1018.9px;top:205.90px;color:#35619a;transform:scaleX(0.8527)">Assign</div><div class="t" style="left:1018.9px;top:222.30px;color:#35619a;transform:scaleX(0.8527)">Assign</div><div class="t" style="left:1183px;top:91.40px;color:#22607e;transform:scaleX(0.8362)">ReferenceParcel</div><div class="t" style="left:1203.3px;top:107.60px;color:#22607e;transform:scaleX(0.8012)">RPid</div><div class="t" style="left:1207.5px;top:124.20px;color:#22607e;transform:scaleX(0.9458)">id</div><div class="t" style="left:1186.4px;top:140.60px;color:#22607e;transform:scaleX(0.8854)">relatedAP.href</div><div class="t" style="left:1186.4px;top:157.00px;color:#22607e;transform:scaleX(0.8985)">relatedAP.title</div><div class="t" style="left:1194.2px;top:173.40px;color:#22607e;transform:scaleX(0.9061)">geometry</div><div class="t" style="left:1172.9px;top:189.20px;color:#22607e;transform:scaleX(0.8780)">beginLifespanVersion</div><div class="t" style="left:1193px;top:205.90px;color:#22607e;transform:scaleX(0.8772)">validFrom</div><div class="t" style="left:1198px;top:222.30px;color:#22607e;transform:scaleX(0.9033)">validTo</div><div class="t" style="left:922.1px;top:139.60px;color:#c4c4c4;font-size:8.3px;transform:scaleX(0.8634)">var</div><div class="t" style="left:922.8px;top:149.40px;color:#c4c4c4;font-size:8.3px;transform:scaleX(0.8634)">var</div><div class="t" style="left:921.6px;top:156.10px;color:#c4c4c4;font-size:8.3px;transform:scaleX(0.8634)">var</div>
</body></html>
